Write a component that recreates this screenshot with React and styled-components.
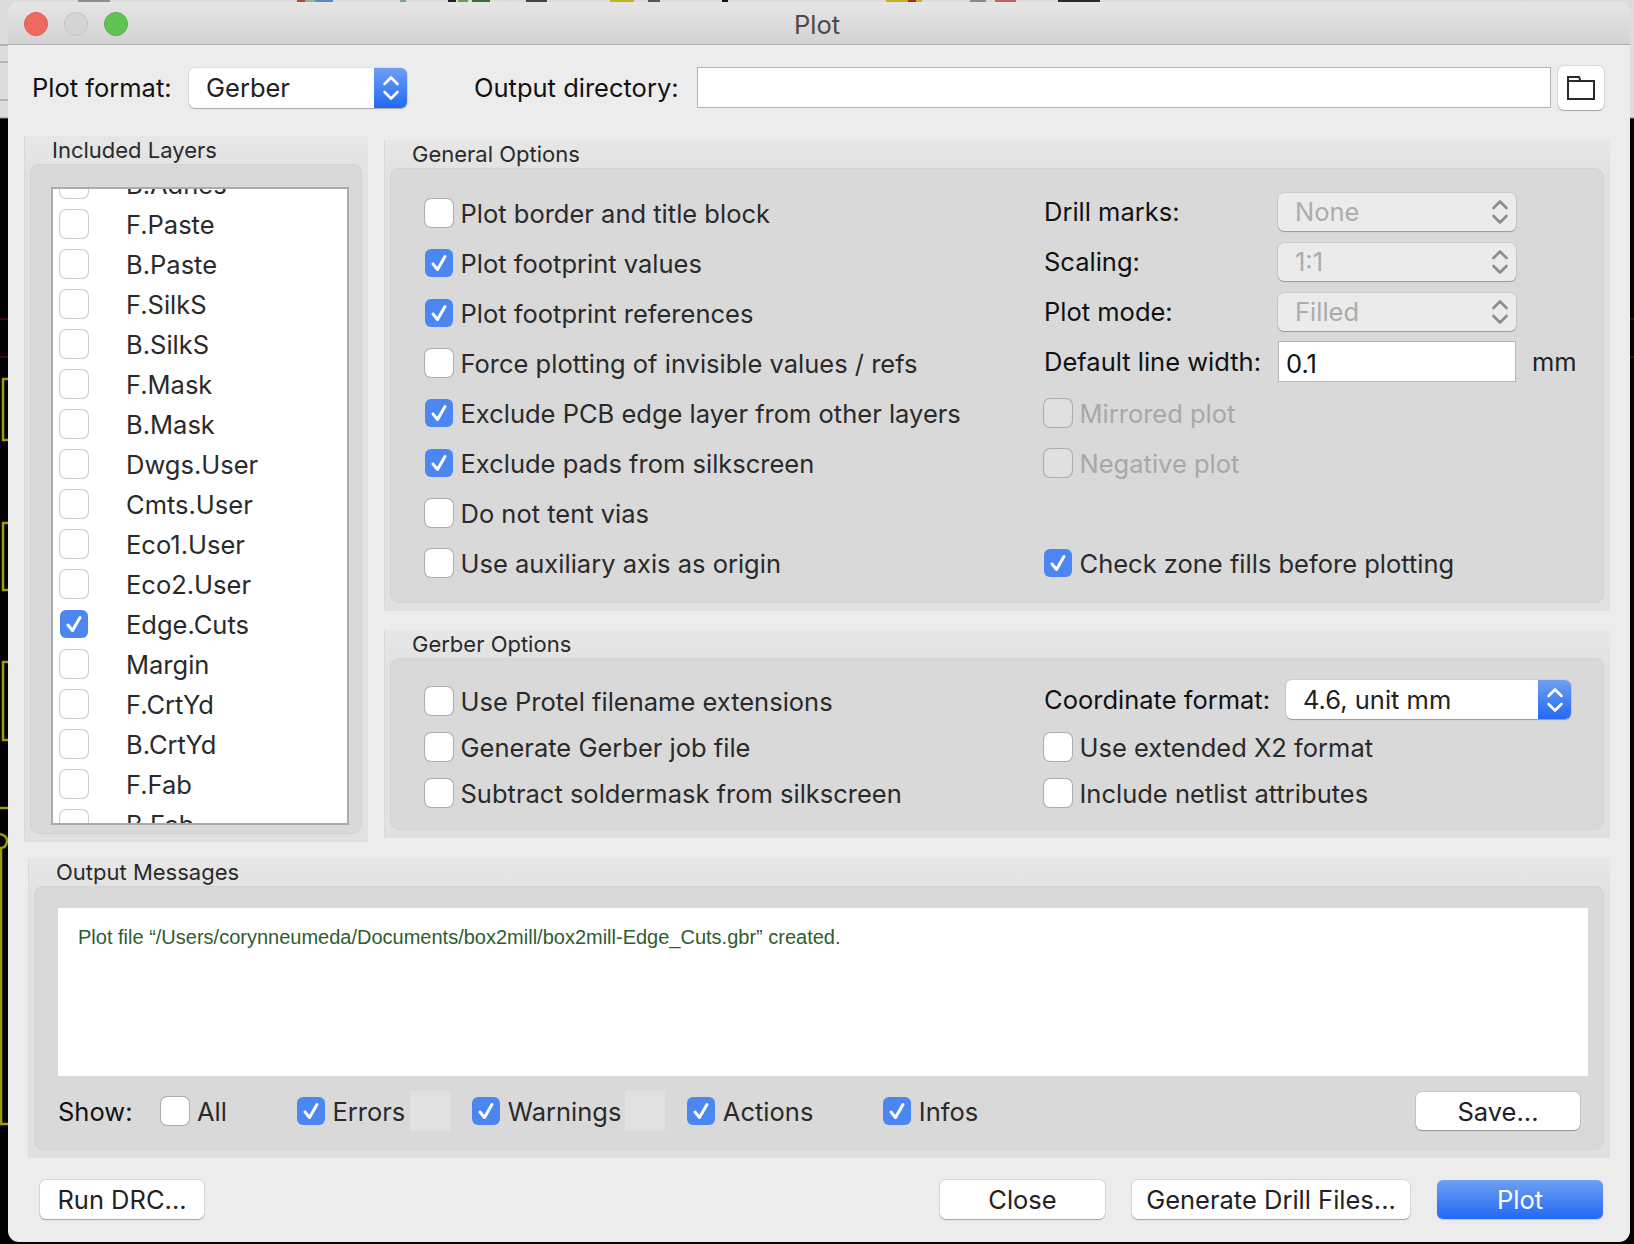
import React from "react";
import styled, { createGlobalStyle } from "styled-components";

const Global = createGlobalStyle`
  html, body { margin: 0; padding: 0; background: #000; }
  body {
    width: 1634px; height: 1244px; overflow: hidden;
    background: linear-gradient(#dcdcdc 0, #dcdcdc 118px, #000 118px);
  }
  * { box-sizing: border-box; }
`;

const Desktop = styled.svg`
  position: absolute;
  left: 0;
  top: 0;
`;
const Window = styled.div`
  position: relative;
  margin: 2px 4px 2px 8px;
  height: 1240px;
  background: #ececec;
  border-radius: 11px;
  overflow: hidden;
  display: flex;
  flex-direction: column;
  font-family: Inter, "Liberation Sans", sans-serif;
  font-size: 25.5px;
  color: #222;
  white-space: nowrap;
`;
const TitleBar = styled.div`
  height: 43px;
  flex: none;
  position: relative;
  display: flex;
  align-items: center;
  justify-content: center;
  padding: 2px 4px 0 0;
  background: linear-gradient(#e6e6e6, #d2d2d2);
  border-bottom: 1px solid #b0b0b0;
  color: #4a4a4a;
`;
const Lights = styled.div`
  position: absolute;
  left: 16px;
  top: 10px;
  display: flex;
  gap: 16px;
`;
const Light = styled.span`
  width: 24px;
  height: 24px;
  border-radius: 50%;
  background: ${(p) => p.$c};
  border: 1px solid ${(p) => p.$b};
`;
const TopRow = styled.div`
  display: flex;
  align-items: center;
  height: 45px;
  margin: 20px 20px 0 24px;
  color: #111;
`;
const RowLabel = styled.span`
  flex: none;
  width: ${(p) => p.$w}px;
  margin-left: ${(p) => p.$ml || 0}px;
`;
const Button = styled.div`
  display: flex;
  align-items: center;
  justify-content: center;
  height: ${(p) => p.$h || 39}px;
  width: ${(p) => p.$w}px;
  margin-left: ${(p) => (p.$auto ? "auto" : (p.$ml || 0) + "px")};
  background: ${(p) => (p.$primary ? "linear-gradient(#6f9ff2, #2269f5)" : "#fff")};
  color: ${(p) => (p.$primary ? "#fff" : "#222")};
  border-radius: 6px;
  box-shadow: ${(p) => (p.$primary ? "0 1px 1px rgba(0,0,0,.15)" : "0 0 0 1px rgba(0,0,0,.08), 0 1px 1px rgba(0,0,0,.25)")};
  flex: none;
`;
const Select = styled.div`
  display: flex;
  align-items: center;
  height: ${(p) => p.$h || 40}px;
  width: ${(p) => p.$w}px;
  padding-left: 17px;
  background: ${(p) => (p.$disabled ? "#ebebeb" : "#fff")};
  color: ${(p) => (p.$disabled ? "#acacac" : "#222")};
  border-radius: 6px;
  box-shadow: 0 0 0 1px rgba(0,0,0,.06), 0 1px 1px rgba(0,0,0,.25);
  position: relative;
  overflow: hidden;
  flex: none;
`;
const Stepper = styled.span`
  position: absolute;
  right: 0;
  top: 0;
  bottom: 0;
  width: ${(p) => p.$w}px;
  display: flex;
  align-items: center;
  justify-content: center;
  background: ${(p) => (p.$disabled ? "transparent" : "linear-gradient(#6f9ff2, #2269f5)")};
  color: ${(p) => (p.$disabled ? "#8c8c8c" : "#fff")};
`;
const TextInput = styled.div`
  display: flex;
  align-items: center;
  height: ${(p) => p.$h}px;
  width: ${(p) => p.$w}px;
  padding: 3px 0 0 7px;
  background: #fff;
  border: 1px solid #b4b4b4;
  color: #111;
  flex: none;
`;
const Main = styled.div`
  display: flex;
  margin: 26px 20px 0 16px;
  gap: 16px;
  height: 706px;
  flex: none;
`;
const Group = styled.section`
  background: linear-gradient(#e7e7e7, #e1e1e1 40px);
  border-left: 1px solid #d9d9d9;
  padding: 0 6px 8px 5px;
  display: flex;
  flex-direction: column;
  flex: none;
  width: ${(p) => (p.$w ? p.$w + "px" : "auto")};
  height: ${(p) => (p.$h ? p.$h + "px" : "auto")};
  margin: ${(p) => p.$m || 0};
`;
const GroupTitle = styled.div`
  height: 28px;
  flex: none;
  display: flex;
  align-items: center;
  padding-left: ${(p) => p.$pl}px;
  font-size: 22px;
  color: #2a2a2a;
`;
const GroupBody = styled.div`
  flex: 1;
  background: #d9d9d9;
  border: 1px solid #d2d2d2;
  border-radius: 9px;
  min-height: 0;
`;
const LayerBody = styled(GroupBody)`
  padding: 22px 12px 8px 20px;
`;
const LayerList = styled.div`
  height: 638px;
  background: #fff;
  border: 2px solid #ababab;
  overflow: hidden;
`;
const LayerRows = styled.div`
  margin-top: -25px;
  padding-left: 7px;
`;
const LayerRow = styled.div`
  height: 40px;
  display: flex;
  align-items: center;
  gap: 38px;
  color: #2a2a2a;
`;
const Box = styled.span`
  width: 28px;
  height: 28px;
  flex: none;
  display: flex;
  align-items: center;
  justify-content: center;
  border-radius: 6px;
  background: ${(p) => (p.$on ? "#4b86f1" : p.$disabled ? "#e0e0e0" : "#fff")};
  box-shadow: ${(p) => (p.$on ? "none" : "0 0 0 1px rgba(0,0,0,.2), inset 0 0 1px rgba(0,0,0,.12)")};
`;
const Column = styled.div`
  flex: 1;
  display: flex;
  flex-direction: column;
  gap: 19px;
  margin-top: 4px;
  min-width: 0;
`;
const OptionsGrid = styled.div`
  height: 100%;
  display: grid;
  grid-template-columns: 619px 1fr;
  grid-auto-rows: ${(p) => p.$row}px;
  padding: ${(p) => p.$pt}px 0 0 34px;
`;
const Check = styled.div`
  display: flex;
  align-items: center;
  gap: 7.5px;
  color: ${(p) => (p.$disabled ? "#a8a8a8" : "#2a2a2a")};
`;
const Field = styled.div`
  display: flex;
  align-items: center;
  padding-bottom: 3px;
  color: #111;
`;
const FieldLabel = styled.span`
  width: ${(p) => p.$w}px;
  flex: none;
`;
const Unit = styled.span`
  margin-left: 16px;
  color: #222;
`;
const Messages = styled.div`
  height: 168px;
  margin: 21px 15px 0 23px;
  padding: 18px 0 0 20px;
  background: #fff;
  flex: none;
  font-family: "Liberation Sans", Arial, sans-serif;
  font-size: 20px;
  color: #2f5c2f;
`;
const OutputBody = styled(GroupBody)`
  display: flex;
  flex-direction: column;
`;
const ShowRow = styled.div`
  display: flex;
  align-items: center;
  height: 70px;
  margin: 0 23px 0 23px;
  color: #2a2a2a;
`;
const ShowItem = styled.div`
  display: flex;
  align-items: center;
  gap: 7.5px;
  margin-left: ${(p) => p.$ml}px;
`;
const CountBox = styled.span`
  width: 40px;
  height: 40px;
  background: #e1e1e1;
  margin-left: ${(p) => p.$ml}px;
`;
const ShowLabel = styled.span`
  color: #111;
`;
const Footer = styled.div`
  display: flex;
  align-items: center;
  margin: 22px 0 0 32px;
`;

const Chevrons = ({ size = 24 }) => (
  <svg width={size} height={size + 6} viewBox="0 0 24 30" fill="none" stroke="currentColor" strokeWidth="2.6" strokeLinecap="round" strokeLinejoin="round">
    <path d="M5.5 11 L12 4.5 L18.5 11" />
    <path d="M5.5 19 L12 25.5 L18.5 19" />
  </svg>
);
const Tick = () => (
  <svg width="22" height="22" viewBox="0 0 22 22" fill="none" stroke="#fff" strokeWidth="3" strokeLinecap="round" strokeLinejoin="round">
    <path d="M5 12 L9.5 17.5 L17 4.5" />
  </svg>
);
const CheckBox = ({ on, disabled }) => (
  <Box $on={on} $disabled={disabled}>{on && <Tick />}</Box>
);
const Folder = () => (
  <svg width="30" height="26" viewBox="0 0 30 26" fill="none" stroke="#2a2a2a" strokeWidth="2">
    <path d="M2 24 V2 H13 L14.5 6 H28 V24 Z" />
    <path d="M2 6 H14.5" />
  </svg>
);

const topBits = [
  [78, 32, "#8e8e8e"], [297, 8, "#b5493f"], [305, 10, "#8fb98f"], [315, 18, "#5f86c9"], [400, 6, "#7aa97a"],
  [448, 8, "#222"], [458, 10, "#6d9c55"], [472, 18, "#3a6b3a"], [526, 21, "#4a4040"], [610, 24, "#c2b42a"],
  [648, 12, "#555"], [722, 6, "#111"], [886, 36, "#c2b42a"], [908, 8, "#a52a20"], [970, 16, "#888"],
  [995, 21, "#c06060"], [1058, 42, "#2a2a2a"],
];
const Backdrop = () => (
  <Desktop width="1634" height="1244" viewBox="0 0 1634 1244" fill="none">
    {topBits.map(([x, w, c]) => (
      <rect key={x} x={x} y="0" width={w} height="2" fill={c} />
    ))}
    <path d="M0 45 H8 M0 62 H8 M0 100 H8 M0 118 H8 M1630 118 H1634" stroke="#8a8a8a" strokeWidth="1" />
    <path d="M0 319 H8 M0 357 H8 M1630 319 H1634 M1630 357 H1634" stroke="#5a0a0a" strokeWidth="1.5" />
    <g stroke="#9d9d00" strokeWidth="2.5">
      <path d="M8 379 H3 V440 H8" />
      <path d="M8 523 H3 V590 H8" />
      <path d="M8 662 H3 V740 H8" />
      <path d="M0 808 H8" />
      <path d="M0 834 Q8 836 7 842 Q6 848 0 848" />
      <path d="M1 848 V1124 H8" />
    </g>
  </Desktop>
);

const layers = [
  ["B.Adhes"], ["F.Paste"], ["B.Paste"], ["F.SilkS"], ["B.SilkS"], ["F.Mask"], ["B.Mask"],
  ["Dwgs.User"], ["Cmts.User"], ["Eco1.User"], ["Eco2.User"], ["Edge.Cuts", true], ["Margin"],
  ["F.CrtYd"], ["B.CrtYd"], ["F.Fab"], ["B.Fab"],
];

const CheckItem = ({ on, disabled, children }) => (
  <Check $disabled={disabled}>
    <CheckBox on={on} disabled={disabled} />
    {children}
  </Check>
);
const Drop = ({ label, value }) => (
  <Field>
    <FieldLabel $w={234}>{label}</FieldLabel>
    <Select $w={238} $h={38} $disabled>
      {value}
      <Stepper $w={32} $disabled><Chevrons /></Stepper>
    </Select>
  </Field>
);

export default function App() {
  return (
    <>
      <Global />
      <Backdrop />
      <Window>
        <TitleBar>
          <Lights>
            <Light $c="#ee6a5f" $b="#dc5c50" />
            <Light $c="#d5d5d5" $b="#c2c2c2" />
            <Light $c="#5fc454" $b="#52ae47" />
          </Lights>
          Plot
        </TitleBar>
        <TopRow>
          <RowLabel $w={157}>Plot format:</RowLabel>
          <Select $w={218}>
            Gerber
            <Stepper $w={33}><Chevrons /></Stepper>
          </Select>
          <RowLabel $w={223} $ml={67}>Output directory:</RowLabel>
          <TextInput $w={854} $h={41} />
          <Button $w={46} $h={44} $ml={7}><Folder /></Button>
        </TopRow>
        <Main>
          <Group $w={344}>
            <GroupTitle $pl={22}>Included Layers</GroupTitle>
            <LayerBody>
              <LayerList>
                <LayerRows>
                  {layers.map(([name, on]) => (
                    <LayerRow key={name}>
                      <CheckBox on={on} />
                      {name}
                    </LayerRow>
                  ))}
                </LayerRows>
              </LayerList>
            </LayerBody>
          </Group>
          <Column>
            <Group $h={471}>
              <GroupTitle $pl={22}>General Options</GroupTitle>
              <GroupBody>
                <OptionsGrid $row={50} $pt={19}>
                  <CheckItem>Plot border and title block</CheckItem>
                  <Drop label="Drill marks:" value="None" />
                  <CheckItem on>Plot footprint values</CheckItem>
                  <Drop label="Scaling:" value="1:1" />
                  <CheckItem on>Plot footprint references</CheckItem>
                  <Drop label="Plot mode:" value="Filled" />
                  <CheckItem>Force plotting of invisible values / refs</CheckItem>
                  <Field>
                    <FieldLabel $w={234}>Default line width:</FieldLabel>
                    <TextInput $w={238} $h={41}>0.1</TextInput>
                    <Unit>mm</Unit>
                  </Field>
                  <CheckItem on>Exclude PCB edge layer from other layers</CheckItem>
                  <CheckItem disabled>Mirrored plot</CheckItem>
                  <CheckItem on>Exclude pads from silkscreen</CheckItem>
                  <CheckItem disabled>Negative plot</CheckItem>
                  <CheckItem>Do not tent vias</CheckItem>
                  <span />
                  <CheckItem>Use auxiliary axis as origin</CheckItem>
                  <CheckItem on>Check zone fills before plotting</CheckItem>
                </OptionsGrid>
              </GroupBody>
            </Group>
            <Group $h={208}>
              <GroupTitle $pl={22}>Gerber Options</GroupTitle>
              <GroupBody>
                <OptionsGrid $row={46} $pt={19}>
                  <CheckItem>Use Protel filename extensions</CheckItem>
                  <Field>
                    <FieldLabel $w={242}>Coordinate format:</FieldLabel>
                    <Select $w={285} $h={39}>
                      4.6, unit mm
                      <Stepper $w={33}><Chevrons /></Stepper>
                    </Select>
                  </Field>
                  <CheckItem>Generate Gerber job file</CheckItem>
                  <CheckItem>Use extended X2 format</CheckItem>
                  <CheckItem>Subtract soldermask from silkscreen</CheckItem>
                  <CheckItem>Include netlist attributes</CheckItem>
                </OptionsGrid>
              </GroupBody>
            </Group>
          </Column>
        </Main>
        <Group $h={300} $m="16px 20px 0 20px">
          <GroupTitle $pl={22}>Output Messages</GroupTitle>
          <OutputBody>
            <Messages>Plot file “/Users/corynneumeda/Documents/box2mill/box2mill-Edge_Cuts.gbr” created.</Messages>
            <ShowRow>
              <ShowLabel>Show:</ShowLabel>
              <ShowItem $ml={29}><CheckBox />All</ShowItem>
              <ShowItem $ml={70}><CheckBox on />Errors</ShowItem>
              <CountBox $ml={5} />
              <ShowItem $ml={22}><CheckBox on />Warnings</ShowItem>
              <CountBox $ml={4} />
              <ShowItem $ml={22}><CheckBox on />Actions</ShowItem>
              <ShowItem $ml={70}><CheckBox on />Infos</ShowItem>
              <Button $w={164} $h={38} $auto>Save...</Button>
            </ShowRow>
          </OutputBody>
        </Group>
        <Footer>
          <Button $w={164}>Run DRC...</Button>
          <Button $w={165} $ml={736}>Close</Button>
          <Button $w={278} $ml={27}>Generate Drill Files...</Button>
          <Button $w={166} $ml={27} $primary>Plot</Button>
        </Footer>
      </Window>
    </>
  );
}
